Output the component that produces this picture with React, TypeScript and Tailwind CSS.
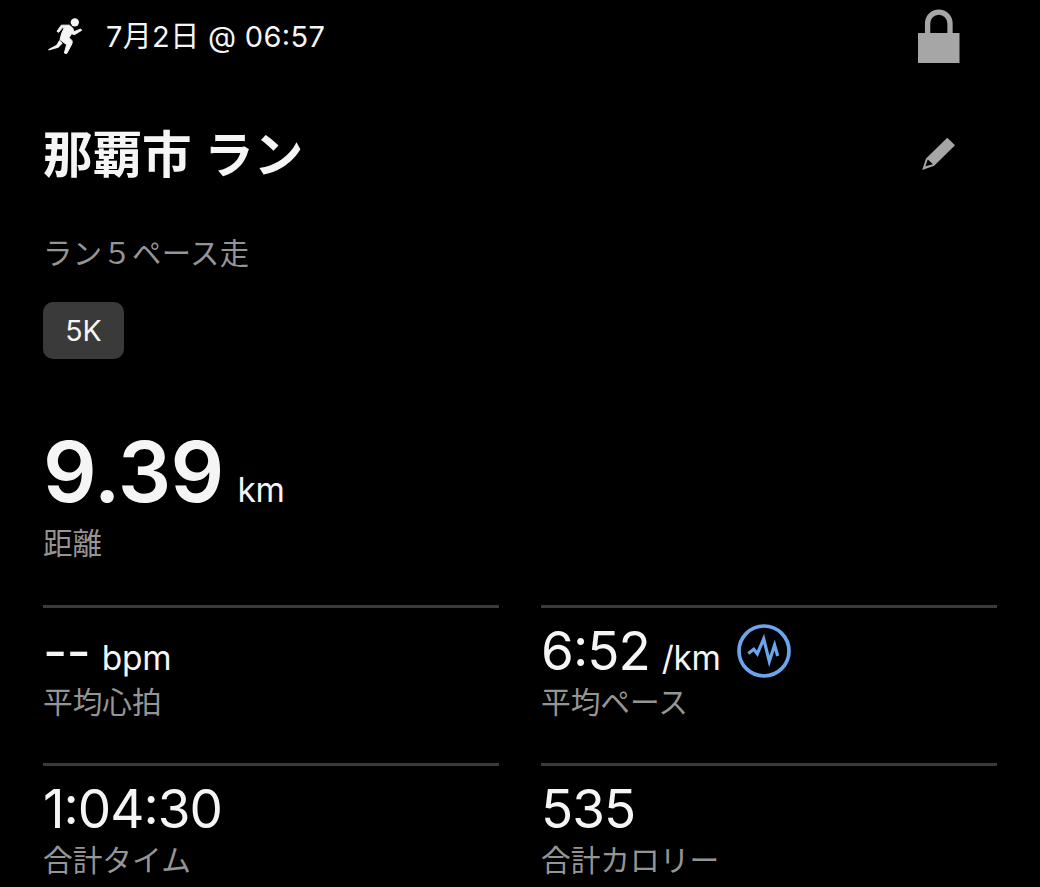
import { Fragment } from "react";
import type { ReactNode } from "react";

function RunnerIcon() {
  return (
    <svg className="h-[40px] w-[40px] shrink-0" viewBox="47 48 120 120" fill="#f5f5f5">
      <circle cx="133.5" cy="67" r="12.5" />
      <path
        d="M80 94 93 75.5 117 75.5 127 84 131 95 151 87 154 91 132 104 124 101 116 113 125.5 122 125 131 109 161 102 159 109 134 89 119 94 100 102 83.5 96 83.5 85 97Z"
        stroke="#f5f5f5"
        strokeWidth="3"
        strokeLinejoin="round"
      />
      <path d="M87 120 97 130 84 143 55 151.5 54 148 78 135Z" />
    </svg>
  );
}

function LockIcon() {
  return (
    <svg className="h-[54px] w-[42px] shrink-0" viewBox="0 0 42 54">
      <path d="M9.6 26V14.6a11.2 11.5 0 0 1 22.4 0V26" fill="none" stroke="#a6a6a6" strokeWidth="5.3" />
      <path d="M0 24h41.5v30H0z" fill="#a6a6a6" />
    </svg>
  );
}

function PencilIcon() {
  return (
    <svg className="h-[34px] w-[34px] shrink-0" viewBox="0 0 34 34" fill="#a6a6a6">
      <path
        fillRule="evenodd"
        d="M25.3 0.7 33 8.2 12.2 28.8 0.2 33 4 21.5ZM5.8 22.6 3.4 29.3 11 27.3Z"
      />
    </svg>
  );
}

function PulseIcon() {
  return (
    <svg
      className="ml-[16px] h-[54px] w-[54px] shrink-0"
      viewBox="0 0 54 54"
      fill="none"
      stroke="#6ba5ee"
      strokeMiterlimit="10"
    >
      <circle cx="27" cy="27" r="25" strokeWidth="3.7" />
      <path d="M11.3 29.5 16.8 25.3 20.3 29.8 26.7 14.8 32.3 37.5 37.6 21 40.7 32" strokeWidth="3.2" />
    </svg>
  );
}

/* Lifts each colon to the optical middle of the digits around it. */
function Digits({ text }: { text: string }) {
  return (
    <>
      {text.split(":").map((part, i) => (
        <Fragment key={i}>
          {i > 0 && <span className="align-[0.085em] leading-[0]">:</span>}
          {part}
        </Fragment>
      ))}
    </>
  );
}

interface StatProps {
  value: string;
  unit?: string;
  label: string;
  icon?: ReactNode;
}

function Stat({ value, unit, label, icon }: StatProps) {
  return (
    <div className="h-[158px] border-t-[3px] border-[#3a3a3a]">
      <div className="mt-[13px] flex h-[60px] items-center">
        <div className="flex items-baseline whitespace-nowrap">
          <span className="text-[53px] leading-[60px] tracking-[-1px]">
            <Digits text={value} />
          </span>
          {unit && <span className="ml-[12px] text-[33.5px] leading-[40px] tracking-[-0.3px]">{unit}</span>}
        </div>
        {icon}
      </div>
      <div className="mt-px text-[29.7px] leading-[40px] text-[#959595]">{label}</div>
    </div>
  );
}

export default function App() {
  return (
    <main className="h-[887px] w-[1040px] overflow-hidden bg-black px-[43px] font-['Inter','Noto_Sans_CJK_JP',sans-serif] text-[#f5f5f5]">
      <header className="flex h-[72px] items-center">
        <div className="ml-[3px]">
          <RunnerIcon />
        </div>
        <span className="ml-[20px] pt-px text-[29px] leading-[40px] tracking-[0.35px]">
          <Digits text="7月2日 @ 06:57" />
        </span>
        <div className="mr-[37px] ml-auto">
          <LockIcon />
        </div>
      </header>

      <div className="mt-[40px] flex h-[84px] items-center justify-between">
        <h1 className="pt-[2px] text-[49.5px] leading-[84px] font-bold [word-spacing:1px]">那覇市 ラン</h1>
        <div className="mr-[41px]">
          <PencilIcon />
        </div>
      </div>

      <p className="mt-[38px] text-[29.3px] leading-[40px] tracking-[0.4px] text-[#959595]">ラン５ペース走</p>

      <div className="mt-[28px] flex h-[57px] w-[81px] items-center justify-center rounded-[10px] bg-[#3a3a3a] pt-px text-[28.5px]">
        5K
      </div>

      <section className="mt-[63px]">
        <div className="flex h-[100px] items-baseline leading-[100px]">
          <span className="text-[84px] font-semibold tracking-[-0.7px]">9.39</span>
          <span className="ml-[14px] text-[33.5px] tracking-[-0.3px]">km</span>
        </div>
        <div className="mt-px text-[29.5px] leading-[40px] text-[#959595]">距離</div>
      </section>

      <section className="mt-[42px] grid grid-cols-2 gap-x-[42px]">
        <Stat value="--" unit="bpm" label="平均心拍" />
        <Stat value="6:52" unit="/km" label="平均ペース" icon={<PulseIcon />} />
        <Stat value="1:04:30" label="合計タイム" />
        <Stat value="535" label="合計カロリー" />
      </section>
    </main>
  );
}
